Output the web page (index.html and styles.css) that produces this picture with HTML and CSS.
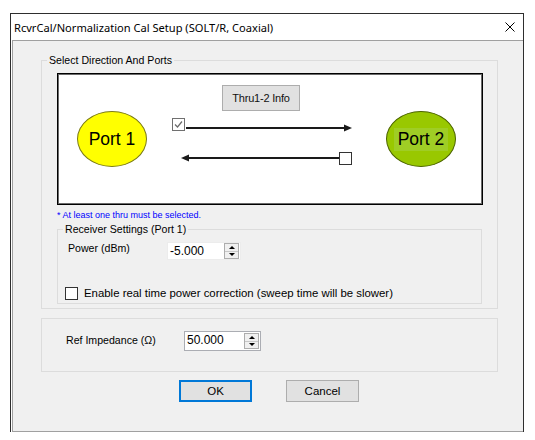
FILE: index.html
```html
<!DOCTYPE html>
<html>
<head>
<meta charset="utf-8">
<title>RcvrCal/Normalization Cal Setup</title>
<link rel="stylesheet" href="styles.css">
</head>
<body>
<div class="window">
  <div class="titlebar">
    <span class="title">RcvrCal/Normalization Cal Setup (SOLT/R, Coaxial)</span>
    <svg class="close" width="10" height="10" viewBox="0 0 10 10"><path d="M0.5 0.5L9.5 9.5M9.5 0.5L0.5 9.5" stroke="#000" stroke-width="1" fill="none"/></svg>
  </div>
  <div class="client">
    <div class="group outer">
      <div class="legend">Select Direction And Ports</div>
      <div class="diagram">
        <svg class="arrows" width="424" height="130" viewBox="0 0 424 130">
          <line x1="128" y1="54" x2="288" y2="54" stroke="#1a1a1a" stroke-width="2"/>
          <polygon points="286,50.5 294,54 286,57.5" fill="#1a1a1a"/>
          <line x1="129" y1="84" x2="282" y2="84" stroke="#1a1a1a" stroke-width="2"/>
          <polygon points="131,80.5 123,84 131,87.5" fill="#1a1a1a"/>
        </svg>
        <div class="port port1"><span>Port 1</span></div>
        <div class="info">Thru1-2 Info</div>
        <span class="dchk dchk-on"><svg width="11" height="11" viewBox="0 0 11 11"><path d="M2 5.5L4.5 8L9 2.5" stroke="#6b6b6b" stroke-width="1.2" fill="none"/></svg></span>
        <span class="dchk dchk-off"></span>
        <div class="port port2"><span>Port 2</span></div>
      </div>
      <div class="note">* At least one thru must be selected.</div>
      <div class="group recv">
        <div class="legend">Receiver Settings (Port 1)</div>
        <div class="row power-row">
          <span class="lbl power-lbl">Power (dBm)</span>
          <div class="spin spin-power">
            <span class="val">-5.000</span>
            <span class="spin-btns"><span class="sb up"></span><span class="sb down"></span></span>
          </div>
        </div>
        <div class="check-row">
          <span class="box"></span>
          <span class="check-text">Enable real time power correction (sweep time will be slower)</span>
        </div>
      </div>
    </div>
    <div class="group ref">
      <span class="lbl ref-lbl">Ref Impedance (Ω)</span>
      <div class="spin spin-ref">
        <span class="val">50.000</span>
        <span class="spin-btns"><span class="sb up"></span><span class="sb down"></span></span>
      </div>
    </div>
    <div class="buttons">
      <button class="btn ok">OK</button>
      <button class="btn cancel">Cancel</button>
    </div>
  </div>
</div>
</body>
</html>
```
FILE: styles.css
```css
html, body {
  margin: 0;
  padding: 0;
  background: #ffffff;
}
body {
  font-family: "Liberation Sans", Arial, sans-serif;
  color: #000;
}
.window {
  margin: 13px 0 0 10px;
  width: 514px;
  box-sizing: border-box;
  border: 1px solid #2e2e2e;
  border-bottom: none;
  background: #ffffff;
}
.titlebar {
  height: 26px;
  display: flex;
  align-items: center;
  justify-content: space-between;
  padding: 0 8px 0 3px;
}
.title {
  font-family: "Noto Sans", "Open Sans", sans-serif;
  font-size: 11.1px;
  color: #000;
}
.close {
  display: block;
}
.client {
  margin-left: 1px;
  height: 392px;
  box-sizing: border-box;
  border-top: 1px solid #a0a0a0;
  border-left: 1px solid #a0a0a0;
  border-bottom: 1px solid #a0a0a0;
  background: #f0f0f0;
  padding-top: 19px;
}
.group {
  border: 1px solid #dcdcdc;
  box-sizing: border-box;
}
.legend {
  width: fit-content;
  height: 13px;
  line-height: 13px;
  margin: -7px 0 0 5px;
  padding: 0 2px;
  background: #f0f0f0;
  font-size: 10.6px;
}
.outer {
  margin-left: 28px;
  width: 457px;
  padding-bottom: 4px;
}
.diagram {
  position: relative;
  margin: 6px 0 0 15px;
  width: 426px;
  height: 132px;
  box-sizing: border-box;
  border: 1px solid #000;
  box-shadow: inset 1px 1px 0 #6a6a6a, inset -1px -1px 0 #6a6a6a;
  background: #ffffff;
}
.arrows {
  position: absolute;
  left: 0;
  top: 0;
}
.port {
  position: absolute;
  top: 37px;
  width: 70px;
  height: 56px;
  box-sizing: border-box;
  border-radius: 50%;
  display: flex;
  align-items: center;
  justify-content: center;
  font-size: 17.5px;
}
.port1 {
  left: 19px;
  background: #ffff00;
  border: 1px solid #7a7a1a;
}
.port2 {
  left: 328px;
  background: #99c800;
  border: 1px solid #4c6400;
}
.port2 span {
  background: #9fcd25;
  padding: 1px 4px;
}
.info {
  position: absolute;
  left: 164px;
  top: 11px;
  width: 78px;
  height: 26px;
  box-sizing: border-box;
  background: #e1e1e1;
  border: 1px solid #adadad;
  font-size: 11px;
  letter-spacing: -0.2px;
  display: flex;
  align-items: center;
  justify-content: center;
  color: #111;
}
.dchk {
  position: absolute;
  width: 13px;
  height: 13px;
  box-sizing: border-box;
  background: #fff;
  display: flex;
  align-items: center;
  justify-content: center;
}
.dchk-on {
  left: 114px;
  top: 44px;
  border: 1px solid #707070;
}
.dchk-off {
  left: 281px;
  top: 78px;
  border: 1px solid #333;
}
.note {
  margin: 5px 0 0 15px;
  font-size: 9px;
  line-height: 11px;
  color: #0000ff;
}
.recv {
  margin: 8px 0 0 15px;
  width: 425px;
  padding-bottom: 3px;
}
.row {
  display: flex;
  align-items: flex-start;
}
.power-row {
  margin-top: 6px;
  padding-left: 10px;
}
.lbl {
  font-size: 10.6px;
  line-height: 13px;
}
.power-lbl {
  width: 99px;
}
.spin {
  display: flex;
  box-sizing: border-box;
  background: #fff;
}
.val {
  flex: 1;
  font-size: 12px;
  padding-left: 2px;
}
.spin-power {
  width: 74px;
  height: 18px;
  border: 1px solid #ececec;
}
.spin-power .val {
  line-height: 16px;
}
.spin-btns {
  display: flex;
  flex-direction: column;
  width: 15px;
  margin: 0 1px 0 0;
  border: 1px solid #adadad;
  box-sizing: border-box;
  background: #f0f0f0;
}
.sb {
  flex: 1;
  display: flex;
  align-items: center;
  justify-content: center;
}
.sb.up {
  border-bottom: 1px solid #c8c8c8;
}
.sb.up::after {
  content: "";
  border-left: 3px solid transparent;
  border-right: 3px solid transparent;
  border-bottom: 3px solid #000;
}
.sb.down::after {
  content: "";
  border-left: 3px solid transparent;
  border-right: 3px solid transparent;
  border-top: 3px solid #000;
}
.check-row {
  display: flex;
  align-items: center;
  margin: 26px 0 0 7px;
  height: 14px;
}
.box {
  width: 13px;
  height: 13px;
  box-sizing: border-box;
  border: 1px solid #333;
  background: #fff;
  margin-right: 6px;
}
.check-text {
  font-size: 11.4px;
  line-height: 14px;
}
.ref {
  margin: 9px 0 0 28px;
  width: 457px;
  height: 54px;
  display: flex;
  align-items: flex-start;
  padding: 12px 0 0 24px;
}
.ref-lbl {
  width: 118px;
  line-height: 19px;
}
.spin-ref {
  width: 77px;
  height: 20px;
  border: 1px solid #abadb3;
}
.spin-ref .val {
  line-height: 17px;
}
.spin-ref .spin-btns {
  margin: 1px 1px 1px 0;
}
.buttons {
  display: flex;
  gap: 34px;
  margin: 8px 0 0 166px;
}
.btn {
  width: 73px;
  height: 22px;
  box-sizing: border-box;
  background: #e1e1e1;
  border: 1px solid #adadad;
  font-family: "Liberation Sans", Arial, sans-serif;
  font-size: 11.5px;
  color: #000;
  padding: 0;
  margin: 0;
}
.btn.ok {
  border: 2px solid #0078d7;
}
```
